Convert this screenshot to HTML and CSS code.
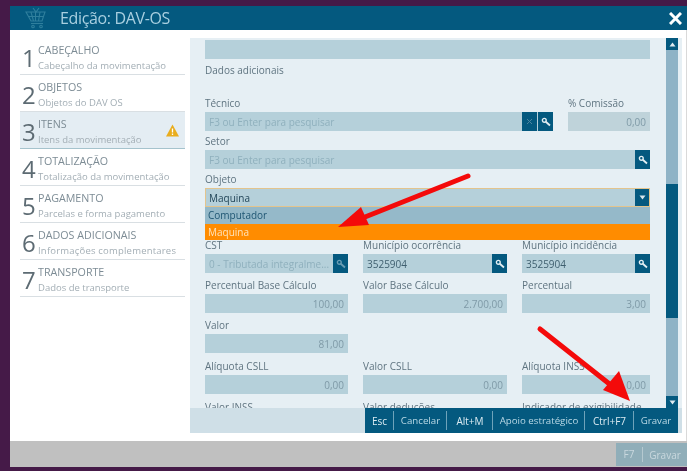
FILE: index.html
```html
<!DOCTYPE html>
<html lang="pt-BR">
<head>
<meta charset="utf-8">
<title>Edição: DAV-OS</title>
<link rel="stylesheet" href="styles.css">
</head>
<body>
<div class="window">
  <header class="head">
    <svg class="cart" width="22" height="22" viewBox="0 0 22 22" fill="none" stroke="#2f7f9d" stroke-width="1.100"><path d="M8 1l3 4 3-4"/><path d="M1 5h19l-3 9H6z"/><path d="M6 5l2.500 9M10.500 5v9M15 5l-1.500 9M3 9.500h15.500"/><path d="M6 16.500h12"/><circle cx="8" cy="19.500" r="1.300"/><circle cx="16" cy="19.500" r="1.300"/></svg>
    <h1 class="title">Edição: DAV-OS</h1>
    <svg class="close" width="13" height="13" viewBox="0 0 13 13" stroke="#fff" stroke-width="3"><path d="M1 1l11 11M12 1L1 12"/></svg>
  </header>
  <main class="main">
    <nav class="steps">
      <div class="step"><span class="num">1</span><div class="txt"><b>CABEÇALHO</b><i>Cabeçalho da movimentação</i></div></div>
      <div class="step"><span class="num">2</span><div class="txt"><b>OBJETOS</b><i>Objetos do DAV OS</i></div></div>
      <div class="step on"><span class="num">3</span><div class="txt"><b>ITENS</b><i>Itens da movimentação</i></div>
        <svg class="warn" width="13" height="13" viewBox="0 0 13 13"><path d="M6.500 0.500L13 12.500H0z" fill="#e9ad1e"/><path d="M6.500 4.500v4M6.500 9.500v1.500" stroke="#fff" stroke-width="1.300"/></svg></div>
      <div class="step"><span class="num">4</span><div class="txt"><b>TOTALIZAÇÃO</b><i>Totalização da movimentação</i></div></div>
      <div class="step"><span class="num">5</span><div class="txt"><b>PAGAMENTO</b><i>Parcelas e forma pagamento</i></div></div>
      <div class="step"><span class="num">6</span><div class="txt"><b>DADOS ADICIONAIS</b><i class="wide">Informações complementares</i></div></div>
      <div class="step"><span class="num">7</span><div class="txt"><b>TRANSPORTE</b><i>Dados de transporte</i></div></div>
    </nav>
    <section class="panel">
      <div class="body">
        <div class="form">
          <div class="input top"></div>
          <div class="note">Dados adicionais</div>
          <div class="row tecnico">
            <div class="field">
              <label>Técnico</label>
              <div class="input ph"><span class="val">F3 ou Enter para pesquisar</span>
                <span class="btn gap"><svg width="9" height="9" viewBox="0 0 9 9" stroke="#4d86a0" stroke-width="1"><path d="M2 2l5 5M7 2L2 7"/></svg></span>
                <span class="btn"><svg class="key" width="10" height="10" viewBox="0 0 10 10"><use href="#key"/></svg></span>
              </div>
            </div>
            <div class="field">
              <label>% Comissão</label>
              <div class="input num-in soft"><span class="val">0,00</span></div>
            </div>
          </div>
          <div class="field">
            <label>Setor</label>
            <div class="input ph"><span class="val">F3 ou Enter para pesquisar</span><span class="btn"><svg width="10" height="10" viewBox="0 0 10 10"><use href="#key"/></svg></span></div>
          </div>
          <div class="field select-wrap">
            <label>Objeto</label>
            <div class="input select"><span class="val">Maquina</span><span class="btn"><svg width="7" height="5" viewBox="0 0 7 5"><path d="M0.500 0.500h6L3.500 4.500z" fill="#d8e6ec"/></svg></span></div>
            <ul class="drop"><li>Computador</li><li class="sel">Maquina</li></ul>
          </div>
          <div class="grid cst">
            <div class="field"><label>CST</label><div class="input ph"><span class="val">0 - Tributada integralme...</span><span class="btn"><svg width="10" height="10" viewBox="0 0 10 10" opacity=".45"><use href="#key"/></svg></span></div></div>
            <div class="field"><label>Município ocorrência</label><div class="input"><span class="val">3525904</span><span class="btn"><svg width="10" height="10" viewBox="0 0 10 10"><use href="#key"/></svg></span></div></div>
            <div class="field"><label>Município incidência</label><div class="input"><span class="val">3525904</span><span class="btn"><svg width="10" height="10" viewBox="0 0 10 10"><use href="#key"/></svg></span></div></div>
          </div>
          <div class="grid sp2">
            <div class="field"><label>Percentual Base Cálculo</label><div class="input num-in"><span class="val">100,00</span></div></div>
            <div class="field"><label>Valor Base Cálculo</label><div class="input num-in"><span class="val">2.700,00</span></div></div>
            <div class="field"><label>Percentual</label><div class="input num-in"><span class="val">3,00</span></div></div>
          </div>
          <div class="grid sp2">
            <div class="field"><label>Valor</label><div class="input num-in"><span class="val">81,00</span></div></div>
          </div>
          <div class="grid sp3">
            <div class="field"><label>Alíquota CSLL</label><div class="input num-in"><span class="val">0,00</span></div></div>
            <div class="field"><label>Valor CSLL</label><div class="input num-in"><span class="val">0,00</span></div></div>
            <div class="field"><label>Alíquota INSS</label><div class="input num-in"><span class="val">0,00</span></div></div>
          </div>
          <div class="grid sp3">
            <div class="field"><label>Valor INSS</label></div>
            <div class="field"><label>Valor deduções</label></div>
            <div class="field"><label>Indicador de exigibilidade</label></div>
          </div>
        </div>
        <div class="scroll">
          <span class="sb up"><svg width="7" height="5" viewBox="0 0 7 5"><path d="M0.500 4.500h6L3.500 0.500z" fill="#dfeaf0"/></svg></span>
          <span class="thumb"></span>
          <span class="sb down"><svg width="7" height="5" viewBox="0 0 7 5"><path d="M0.500 0.500h6L3.500 4.500z" fill="#dfeaf0"/></svg></span>
        </div>
      </div>
      <div class="bar">
        <div class="actions">
          <span class="key-a k1">Esc</span><span class="act a1">Cancelar</span><span class="key-a k2">Alt+M</span><span class="act a2">Apoio estratégico</span><span class="key-a k3">Ctrl+F7</span><span class="act a3">Gravar</span>
        </div>
      </div>
    </section>
  </main>
  <footer class="foot">
    <div class="f7"><span class="f-k">F7</span><span class="f-l">Gravar</span></div>
  </footer>
</div>
<svg class="defs" width="0" height="0"><defs><g id="key" fill="none" stroke="#e3eef3"><circle cx="3.300" cy="3.300" r="1.900" stroke-width="1.400"/><path d="M4.800 4.800L9 8.500" stroke-width="1.800"/></g></defs></svg>
<svg class="arrows" width="687" height="471" viewBox="0 0 687 471">
  <path d="M468 176L365 217" stroke="#f40a0a" stroke-width="5" stroke-linecap="round"/>
  <path d="M338 227L361 207L369 225z" fill="#f40a0a"/>
  <path d="M540 329L612 386" stroke="#f40a0a" stroke-width="5" stroke-linecap="round"/>
  <path d="M630 401L603 390L619 371z" fill="#f40a0a"/>
</svg>
</body>
</html>
```
FILE: styles.css
```css
* { box-sizing: border-box; margin: 0; padding: 0; }
html, body { width: 687px; height: 471px; overflow: hidden; }
body {
  position: relative;
  background: #451a48;
  padding: 6px 0 4px 10px;
  font-family: "Open Sans", "Noto Sans", sans-serif;
  color: #5f7480;
}
.window { height: 461px; display: flex; flex-direction: column; filter: blur(0.6px); }
.head { height: 24px; flex: none; background: #04597f; display: flex; align-items: center; padding: 0 5px 0 15px; }
.cart { margin-right: 13px; flex: none; }
.title { font-size: 16px; font-weight: 400; letter-spacing: -0.35px; color: #a8cfe0; flex: 1; line-height: 24px; }
.close { flex: none; }
.main { flex: 1; background: #fff; display: flex; padding: 8px 5px 8px 10px; min-height: 0; border-right: 1px solid #d9d9d9; }
.steps { width: 165px; margin-right: 5px; flex: none; }
.step { height: 37px; border-bottom: 1px solid #d9dfe3; display: flex; align-items: center; position: relative; padding: 3px 0 0 2px; }
.step.on { background: #e4edf3; border-bottom: 1px solid #a5c3cd; }
.num { font-size: 24px; width: 16px; color: #5d6b73; line-height: 34px; flex: none; }
.txt { display: flex; flex-direction: column; }
.txt b { font-weight: 400; font-size: 10.700px; line-height: 15px; color: #7d8c95; white-space: nowrap; }
.txt i { font-style: normal; font-size: 9.500px; line-height: 15px; color: #a3aeb5; white-space: nowrap; }
.txt i.wide { letter-spacing: 0.2px; }
.warn { position: absolute; right: 6px; top: 12px; }
.panel { width: 492px; flex: none; background: #e6eff4; display: flex; flex-direction: column; }
.body { flex: 1; display: flex; min-height: 0; padding-left: 15px; overflow: hidden; }
.form { width: 445px; flex: none; padding-top: 2px; }
.scroll { width: 12px; margin-left: 16px; background: #8fb3c6; display: flex; flex-direction: column; height: 370px; flex: none; }
.sb { height: 12px; background: #04597f; display: flex; align-items: center; justify-content: center; flex: none; }
.thumb { height: 134px; background: #04597f; margin: 134px 0 auto; }
.input { height: 19px; background: #b5d0da; display: flex; align-items: center; font-size: 10px; color: #3f5f6f; }
.val { flex: 1; padding-left: 4px; white-space: nowrap; overflow: hidden; }
.ph .val { color: #8fb0bd; }
.num-in .val { text-align: right; padding-right: 4px; color: #7f9aa7; }
.soft { background: #bfd3da; }
.btn { width: 15px; height: 19px; background: #04597f; display: flex; align-items: center; justify-content: center; flex: none; }
.btn.gap { margin-right: 1px; }
.note { font-size: 10px; line-height: 19px; margin-top: 2px; }
label { display: block; font-size: 10px; height: 19px; line-height: 21px; color: #5f7480; white-space: nowrap; }
.tecnico { display: grid; grid-template-columns: 348px 82px; column-gap: 15px; margin-top: 13px; }
.select-wrap { position: relative; }
.select { outline: 1px solid #e3c48d; outline-offset: -1px; color: #24475a; }
.drop { position: absolute; left: 0; right: 0; top: 38px; list-style: none; font-size: 10px; z-index: 2; }
.drop li { height: 16.500px; line-height: 16px; padding-left: 3px; background: #95b9c9; color: #1f5673; }
.drop li.sel { background: #ff8c00; color: #ffe2b8; }
.grid { display: grid; grid-template-columns: 143px 144px 128px; column-gap: 15px; }
.cst { margin-top: 28px; }
.sp2 { margin-top: 2px; }
.sp3 { margin-top: 3px; }
.bar { height: 25px; flex: none; background: #cfdfe7; display: flex; justify-content: flex-end; padding-right: 4px; }
.actions { display: flex; background: #04597f; color: #b9d8e5; font-size: 9.700px; align-items: stretch; }
.key-a, .act { display: flex; align-items: center; justify-content: center; position: relative; white-space: nowrap; }
.key-a { color: #dcebf2; font-size: 10px; }
.act::after, .key-a::after { content: ""; position: absolute; right: 0; top: 3px; bottom: 3px; width: 1px; background: #6fa3ba; }
.act.a3::after { display: none; }
.k1 { width: 29px; } .a1 { width: 53px; } .k2 { width: 46px; } .a2 { width: 92px; } .k3 { width: 49px; } .a3 { width: 44px; }
.foot { height: 26px; flex: none; background: #c0c0c0; display: flex; justify-content: flex-end; padding-top: 2px; }
.f7 { width: 71px; height: 23px; background: #90aeb9; color: #c9d8de; font-size: 10px; display: flex; align-items: center; }
.f-k { width: 27px; text-align: center; border-right: 1px solid #b5c9d0; line-height: 15px; }
.f-l { flex: 1; text-align: center; }
.defs { position: absolute; }
.arrows { position: absolute; left: 0; top: 0; }
```
